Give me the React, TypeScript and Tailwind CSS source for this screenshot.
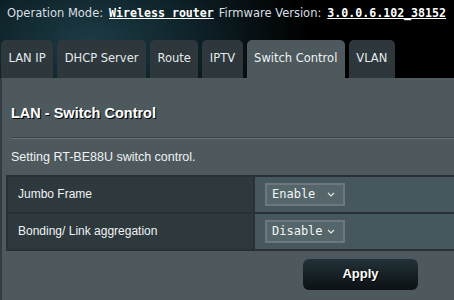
import { ReactNode } from "react";

const tabs = ["LAN IP", "DHCP Server", "Route", "IPTV", "Switch Control", "VLAN"];

function Chevron() {
  return (
    <svg width="8" height="5" viewBox="0 0 8 5" className="ml-auto">
      <path d="M1 1 L4 4 L7 1" stroke="#e6ecee" strokeWidth="1.1" fill="none" />
    </svg>
  );
}

function Select({ value }: { value: string }) {
  return (
    <div className="flex h-[23px] w-[80px] items-center border-2 border-[#6c787b] bg-[#55666a] pl-[5px] pr-[8px] font-['DejaVu_Sans_Mono',monospace] text-[12px] text-[#f2f5f6]">
      <span>{value}</span>
      <Chevron />
    </div>
  );
}

function Row({ label, children }: { label: string; children: ReactNode }) {
  return (
    <div className="flex h-[37px] border-b-2 border-[#283034]">
      <div className="flex w-[247px] items-center border-r-2 border-[#283034] bg-[#2e393e] pl-[10px] text-[12px] text-[#eef2f3]">
        {label}
      </div>
      <div className="flex flex-1 items-center bg-[#46585d] pl-[10px]">{children}</div>
    </div>
  );
}

export default function App() {
  return (
    <div className="h-[300px] w-[454px] overflow-hidden bg-[radial-gradient(ellipse_220px_120px_at_90px_40px,#1d3b45_0%,#0f242b_45%,#000_100%)] font-['Liberation_Sans',Arial,sans-serif]">
      {/* top status line */}
      <div className="flex h-[36px] items-start whitespace-nowrap pl-[7px] pt-[5px] font-['DejaVu_Sans',sans-serif] text-[11.5px] text-[#d8dfe2]">
        <span>Operation Mode:</span>
        <span className="ml-[6px] font-['DejaVu_Sans_Mono',monospace] text-[11.6px] font-bold text-white underline">
          Wireless router
        </span>
        <span className="ml-[5px]">Firmware Version:</span>
        <span className="ml-[6px] font-['DejaVu_Sans_Mono',monospace] text-[11.6px] font-bold text-white underline">
          3.0.0.6.102_38152
        </span>
      </div>

      {/* tabs */}
      <div className="mt-[4px] flex h-[38px] gap-[4px] pl-[1px] font-['DejaVu_Sans',sans-serif] text-[11.5px]">
        {tabs.map((tab) => (
          <div
            key={tab}
            className={`flex items-center rounded-t-[5px] px-[7.5px] ${
              tab === "Switch Control" ? "bg-[#4d595d] text-[#eef2f3]" : "bg-[#2d373c] text-[#e4eaec]"
            }`}
          >
            {tab}
          </div>
        ))}
      </div>

      {/* panel */}
      <div className="h-[222px] border-l-2 border-[#333d41] bg-[#4d595d]">
        <div className="pl-[9px] pt-[25px]">
          <h1 className="text-[14.5px] font-bold text-white [text-shadow:1px_1px_0_#000]">LAN - Switch Control</h1>
          <div className="mt-[12px] h-[2px] border-t border-b border-t-[#3b4549] border-b-[#627074]" />
          <p className="mt-[9px] text-[12.5px] text-[#eef2f3]">Setting RT-BE88U switch control.</p>
        </div>

        <div className="ml-[4px] mt-[8px] border-l-2 border-t-2 border-[#283034]">
          <Row label="Jumbo Frame">
            <Select value="Enable" />
          </Row>
          <Row label="Bonding/ Link aggregation">
            <Select value="Disable" />
          </Row>
        </div>

        <div className="ml-[301px] mt-[8px] flex h-[31px] w-[115px] items-center justify-center rounded-[6px] bg-linear-to-b from-[#233239] to-[#0c1113] text-[13px] font-bold text-white [text-shadow:1px_1px_0_#000]">
          Apply
        </div>
      </div>
    </div>
  );
}
